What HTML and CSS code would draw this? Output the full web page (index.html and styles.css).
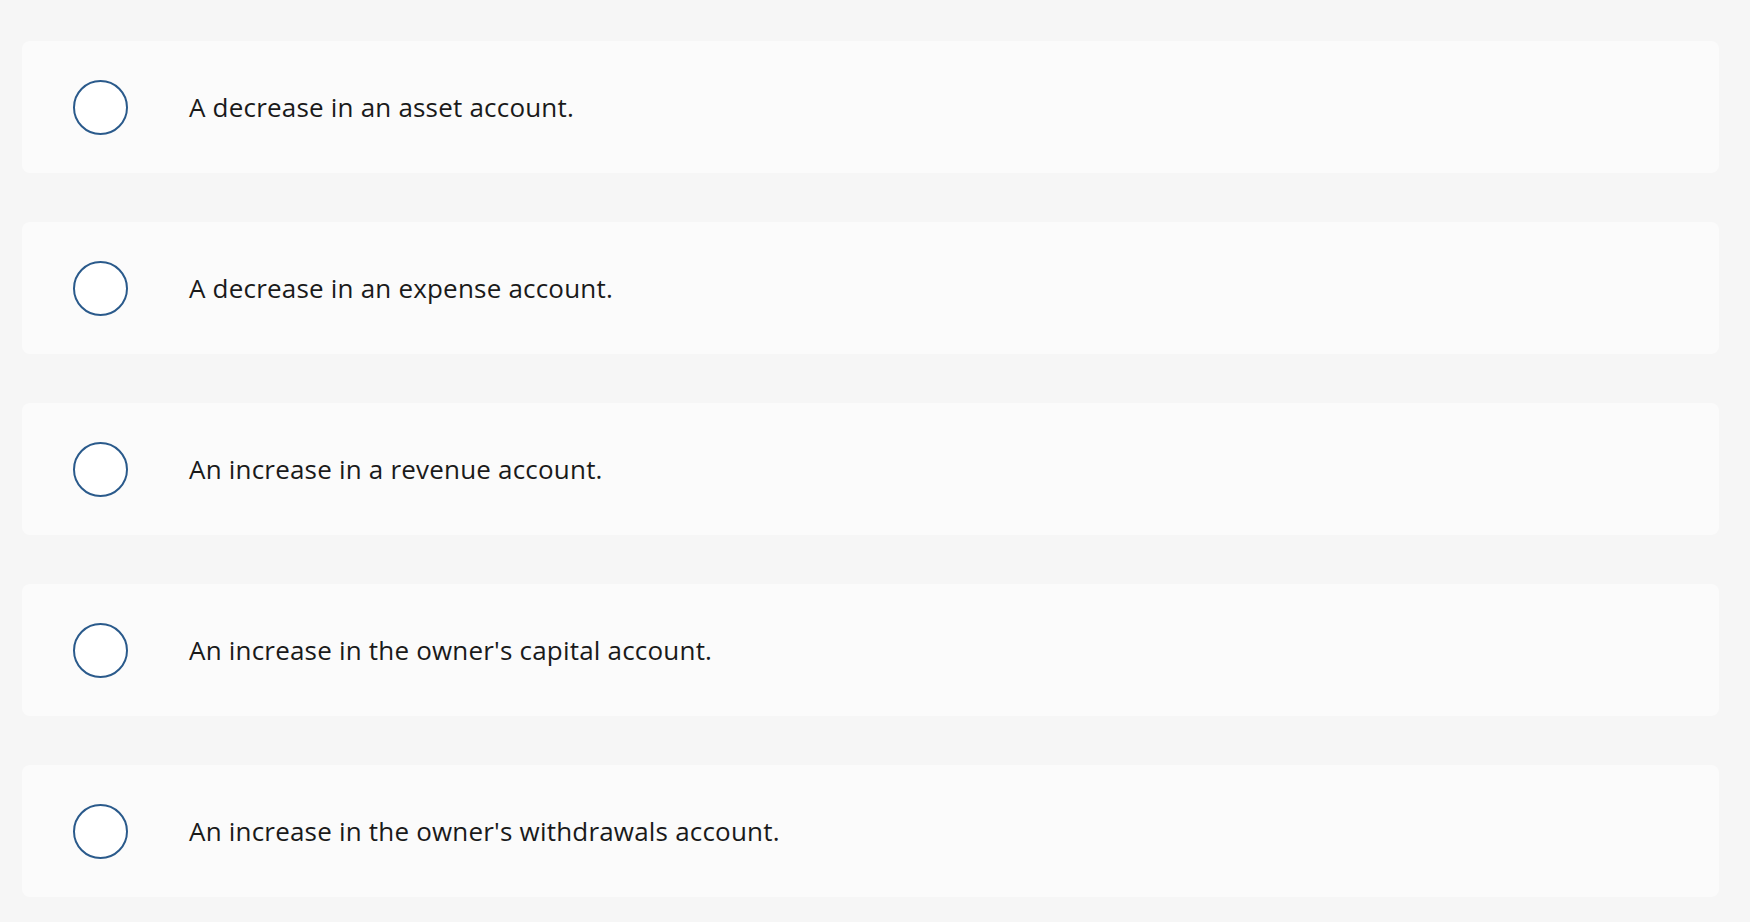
FILE: index.html
```html
<!DOCTYPE html>
<html lang="en">
<head>
<meta charset="utf-8">
<title>Choices</title>
<link rel="stylesheet" href="styles.css">
</head>
<body>
<div class="choices">
  <div class="choice"><span class="radio"></span><span class="label">A decrease in an asset account.</span></div>
  <div class="choice"><span class="radio"></span><span class="label">A decrease in an expense account.</span></div>
  <div class="choice"><span class="radio"></span><span class="label">An increase in a revenue account.</span></div>
  <div class="choice"><span class="radio"></span><span class="label">An increase in the owner's capital account.</span></div>
  <div class="choice"><span class="radio"></span><span class="label">An increase in the owner's withdrawals account.</span></div>
</div>
</body>
</html>
```
FILE: styles.css
```css
html, body {
  margin: 0;
  padding: 0;
  background: #f6f6f6;
}
body {
  font-family: "Open Sans", Lato, sans-serif;
  color: #1a1a1a;
}
.choices {
  display: flex;
  flex-direction: column;
  gap: 49px;
  padding: 41px 31px 0 22px;
}
.choice {
  height: 132px;
  box-sizing: border-box;
  background: #fbfbfb;
  border-radius: 8px;
  display: flex;
  align-items: center;
  padding-left: 51px;
}
.radio {
  width: 55px;
  height: 55px;
  box-sizing: border-box;
  border: 2px solid #2a5a8b;
  border-radius: 50%;
  background: #fff;
  flex: none;
}
.label {
  margin-left: 61px;
  font-size: 26px;
  line-height: 30px;
  letter-spacing: 0.2px;
}
```
